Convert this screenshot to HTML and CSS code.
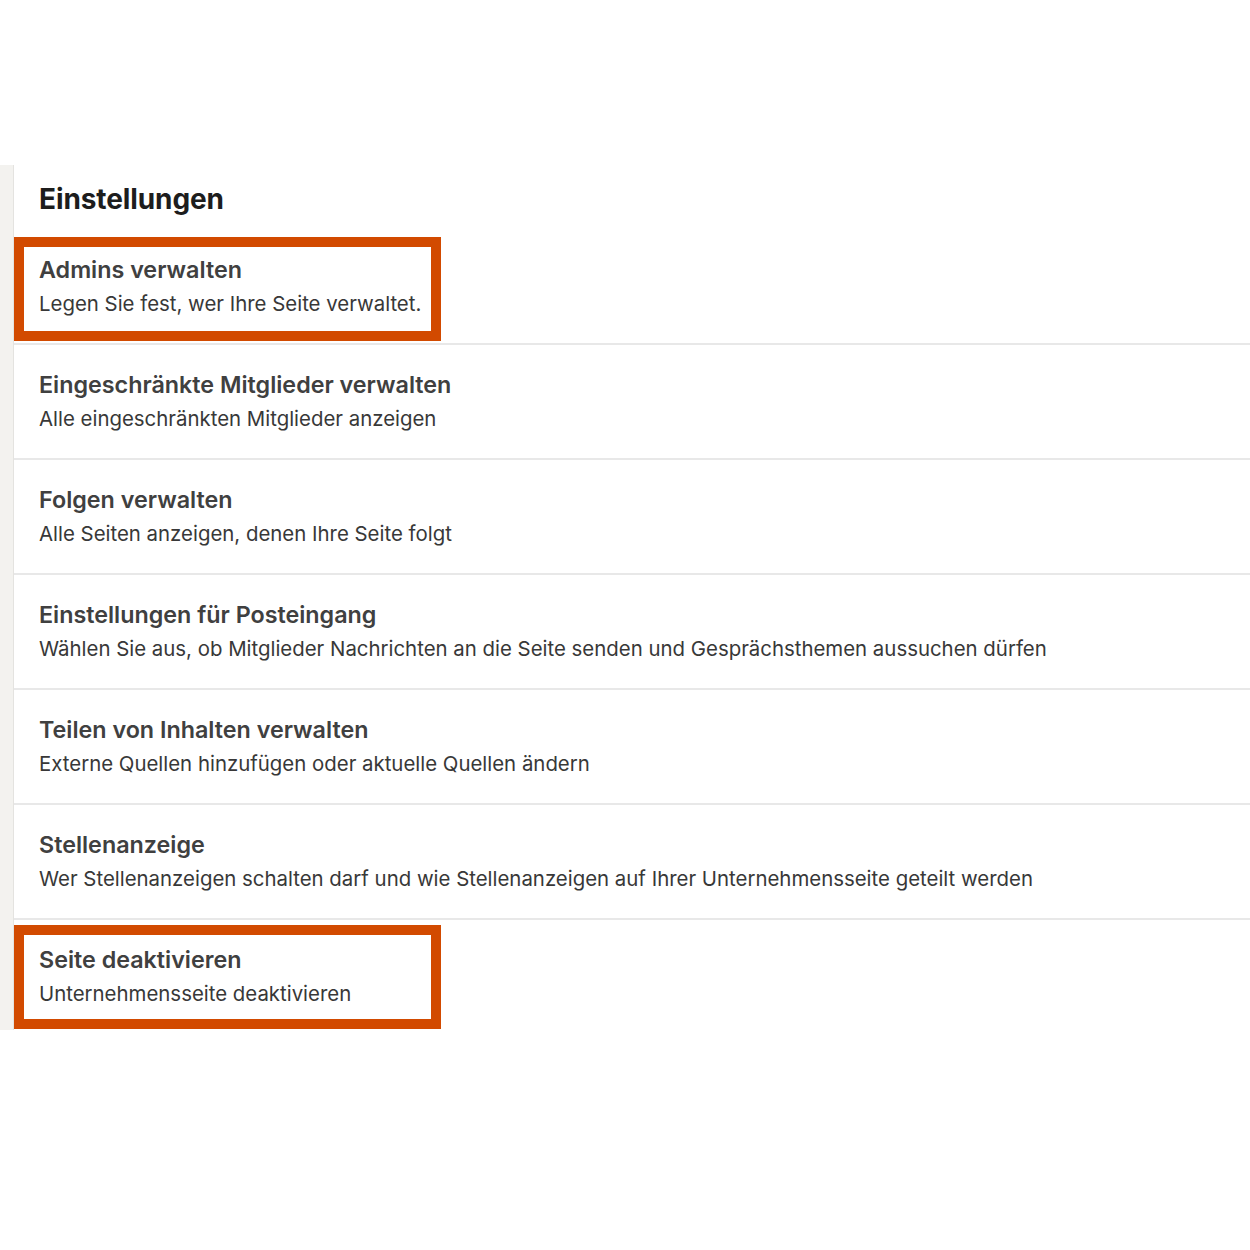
FILE: index.html
```html
<!DOCTYPE html>
<html lang="de">
<head>
<meta charset="utf-8">
<title>Einstellungen</title>
<link rel="stylesheet" href="styles.css">
</head>
<body>
<div class="page">
  <div class="rail"></div>
  <section class="panel">
    <h1 class="panel-title">Einstellungen</h1>
    <ul class="list">
      <li class="row">
        <div class="row-title">Admins verwalten</div>
        <div class="row-desc">Legen Sie fest, wer Ihre Seite verwaltet.</div>
        <span class="mark mark-first"></span>
      </li>
      <li class="row">
        <div class="row-title">Eingeschränkte Mitglieder verwalten</div>
        <div class="row-desc">Alle eingeschränkten Mitglieder anzeigen</div>
      </li>
      <li class="row">
        <div class="row-title">Folgen verwalten</div>
        <div class="row-desc">Alle Seiten anzeigen, denen Ihre Seite folgt</div>
      </li>
      <li class="row">
        <div class="row-title">Einstellungen für Posteingang</div>
        <div class="row-desc">Wählen Sie aus, ob Mitglieder Nachrichten an die Seite senden und Gesprächsthemen aussuchen dürfen</div>
      </li>
      <li class="row">
        <div class="row-title">Teilen von Inhalten verwalten</div>
        <div class="row-desc">Externe Quellen hinzufügen oder aktuelle Quellen ändern</div>
      </li>
      <li class="row">
        <div class="row-title">Stellenanzeige</div>
        <div class="row-desc">Wer Stellenanzeigen schalten darf und wie Stellenanzeigen auf Ihrer Unternehmensseite geteilt werden</div>
      </li>
      <li class="row row-last">
        <div class="row-title">Seite deaktivieren</div>
        <div class="row-desc">Unternehmensseite deaktivieren</div>
        <span class="mark mark-last"></span>
      </li>
    </ul>
  </section>
</div>
</body>
</html>
```
FILE: styles.css
```css
* { box-sizing: border-box; }
html, body { margin: 0; padding: 0; background: #ffffff; }
body {
  font-family: Inter, "Open Sans", "Liberation Sans", sans-serif;
  width: 1250px;
  height: 1250px;
  overflow: hidden;
}
.page {
  display: flex;
  margin-top: 165px;
  height: 865px;
}
.rail {
  width: 14px;
  flex: none;
  background: #f3f2ef;
  border-right: 1px solid #e4e3e0;
}
.panel {
  flex: 1;
  background: #fff;
}
.panel-title {
  margin: 0;
  height: 65px;
  padding: 17px 0 0 25px;
  font-size: 28px;
  font-weight: 700;
  color: #1d1d1d;
  letter-spacing: -0.1px;
  line-height: 34px;
}
.list {
  list-style: none;
  margin: 0;
  padding: 0;
}
.row {
  position: relative;
  height: 115px;
  padding: 26px 0 0 25px;
  border-bottom: 2px solid #e8e8e8;
}
.row-last {
  border-bottom: none;
  height: 110px;
}
.row-title {
  font-size: 23.3px;
  font-weight: 600;
  color: #404040;
  line-height: 28px;
}
.row-desc {
  margin-top: 7px;
  font-size: 20.4px;
  font-weight: 400;
  color: #383838;
  line-height: 26px;
}
.mark {
  position: absolute;
  left: 0;
  width: 427px;
  height: 104px;
  border: 10px solid #d24a00;
  pointer-events: none;
}
.mark-first { top: 7px; }
.mark-last { top: 5px; }
```
